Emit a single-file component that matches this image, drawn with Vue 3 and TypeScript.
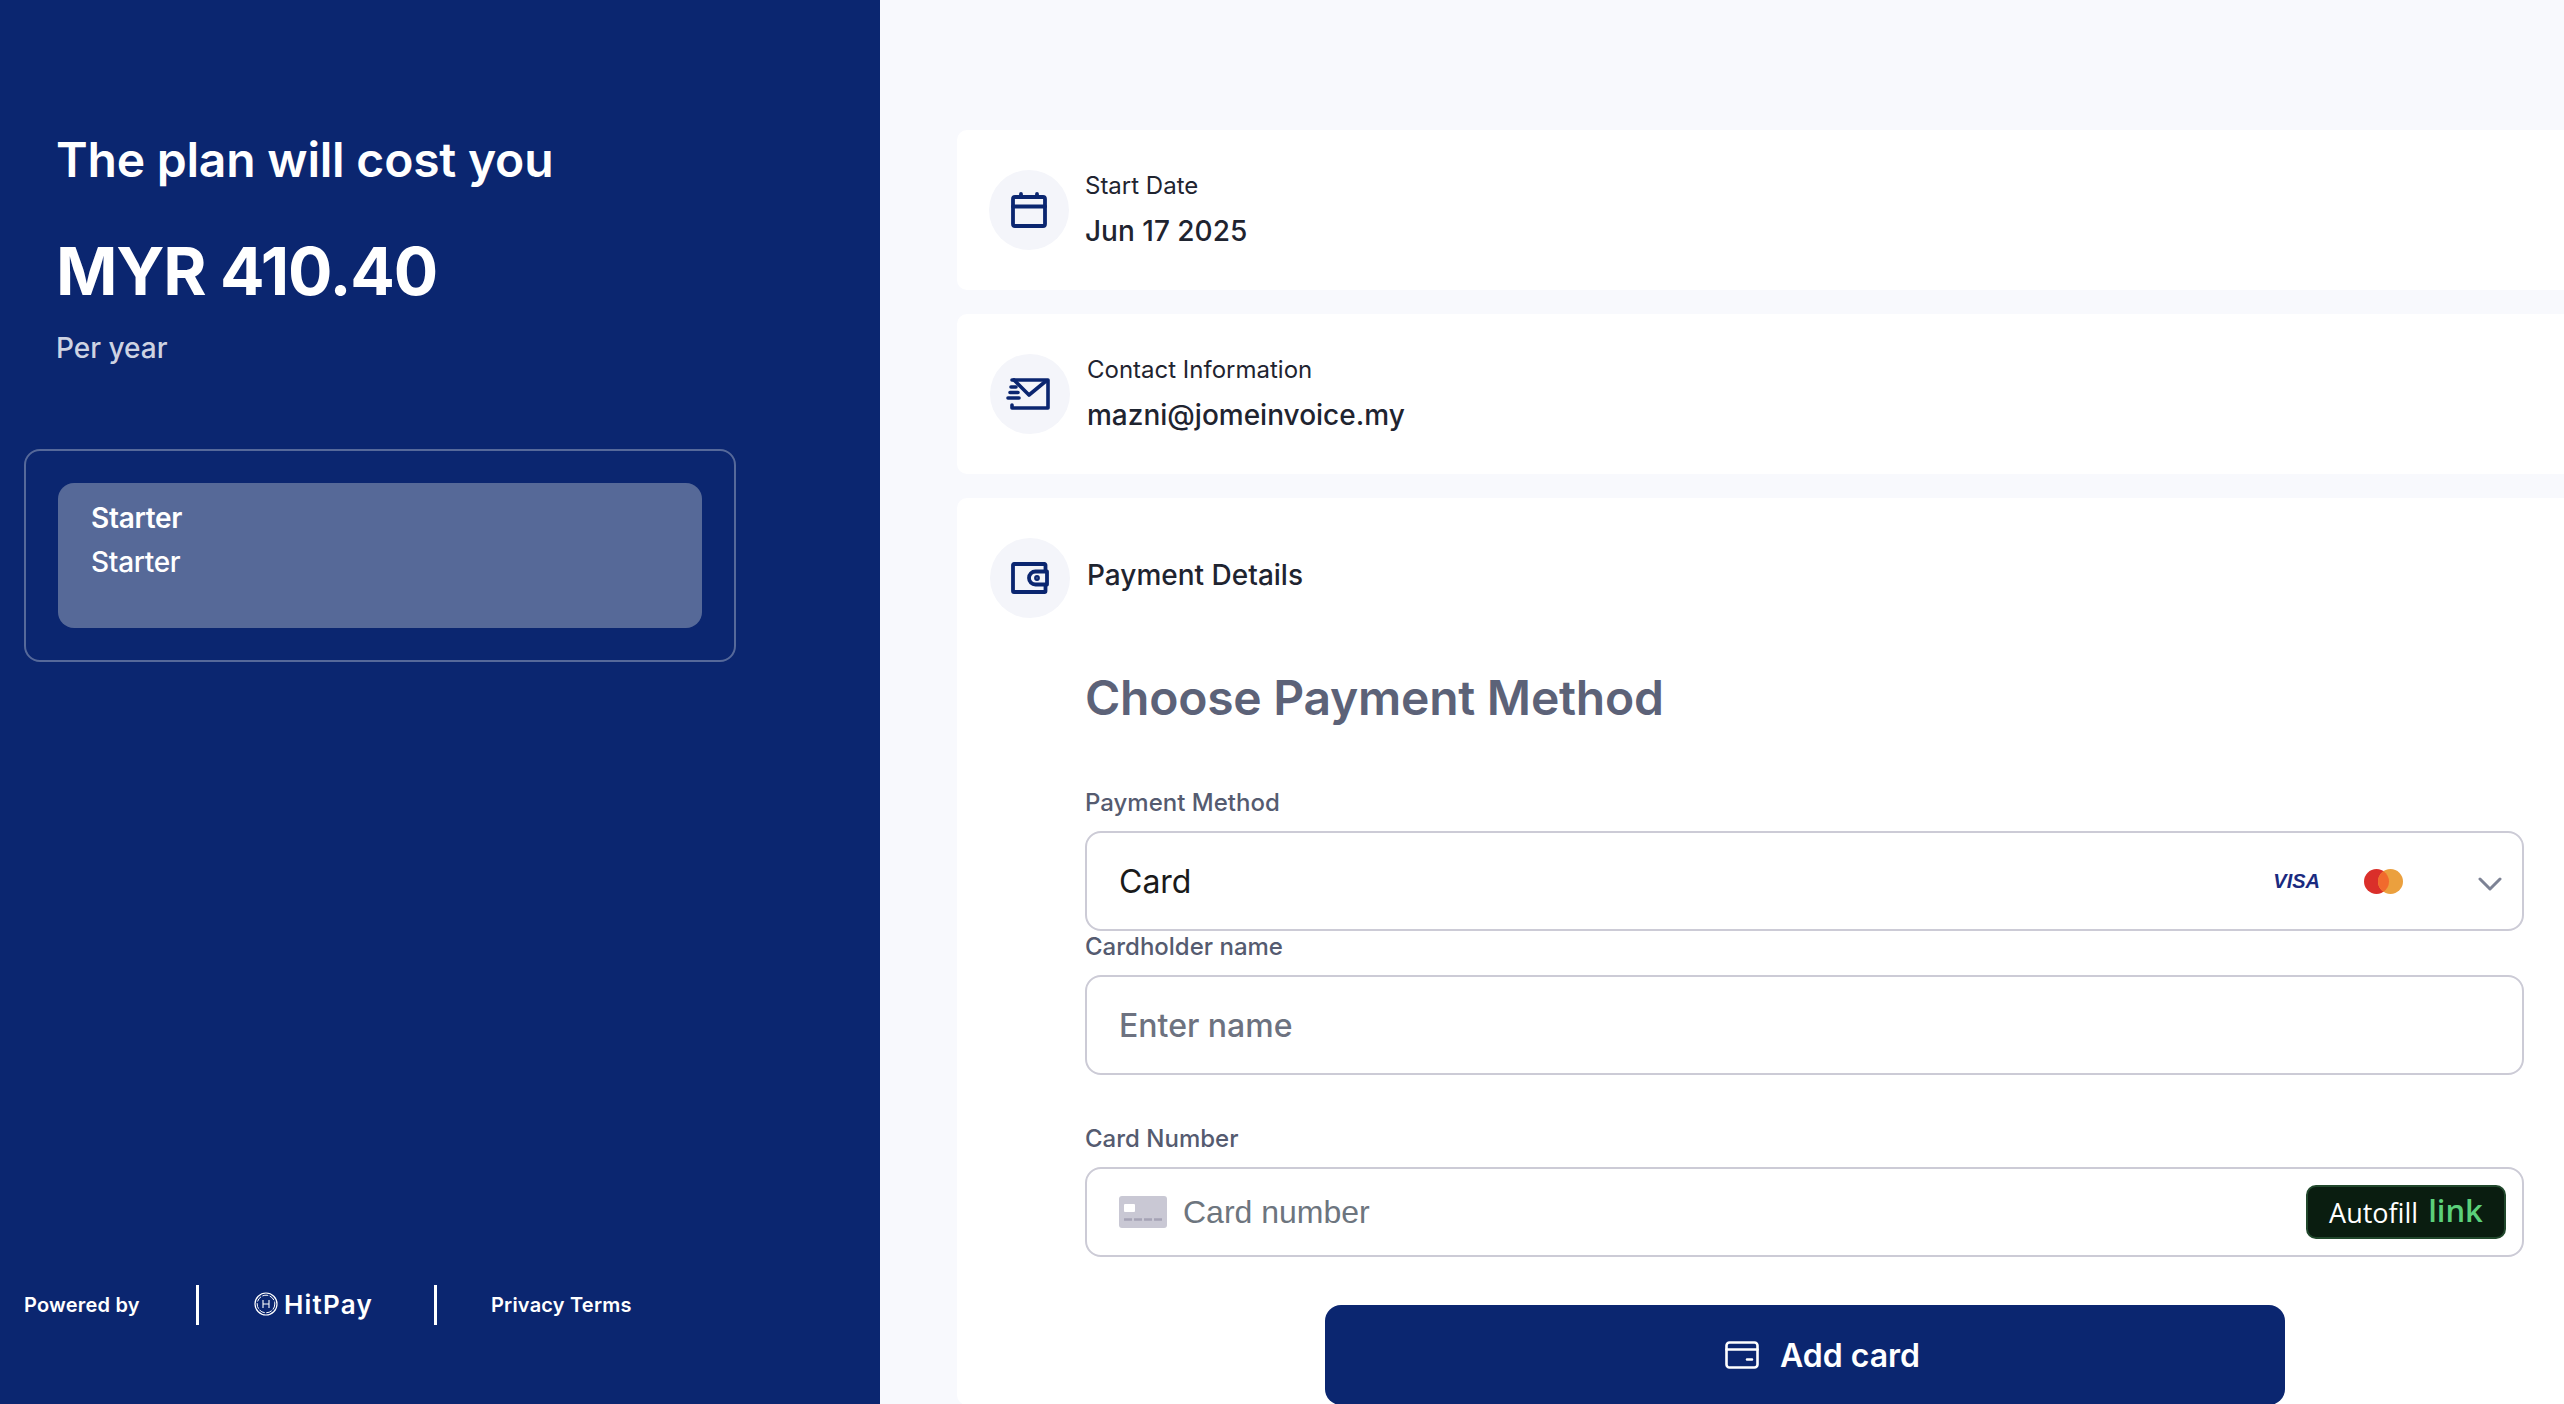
<script setup lang="ts">
const price = 'MYR 410.40'
const planName = 'Starter'
const email = 'mazni@jomeinvoice.my'
</script>

<template>
  <div class="page">
    <aside class="side">
      <div class="summary">
        <h1 class="cost-title">The plan will cost you</h1>
        <div class="cost-price">{{ price }}</div>
        <div class="cost-period">Per year</div>
      </div>
      <div class="plan-box">
        <div class="plan-item">
          <div class="plan-name">{{ planName }}</div>
          <div class="plan-desc">{{ planName }}</div>
        </div>
      </div>
      <footer class="side-foot">
        <span class="powered">Powered by</span>
        <span class="foot-line"></span>
        <span class="hitpay">
          <svg width="24" height="24" viewBox="0 0 24 24" fill="none" stroke="#fff">
            <circle cx="12" cy="12" r="11" stroke-width="1.200" />
            <circle cx="12" cy="12" r="8.800" stroke-width="1" stroke-dasharray="6 1.500" />
            <path d="M9 8v8M15 8v8M9 12h6" stroke-width="1.100" />
          </svg>
          HitPay
        </span>
        <span class="foot-line"></span>
        <span class="legal">Privacy Terms</span>
      </footer>
    </aside>

    <main class="main">
      <section class="card row-card">
        <span class="icon-circle">
          <svg width="36" height="36" viewBox="0 0 36 36" fill="none" stroke="#0b2670" stroke-width="3.800" stroke-linejoin="round" stroke-linecap="round">
            <rect x="2" y="5" width="32" height="29" rx="2" />
            <path d="M2 14.500h32M10 2v3M26 2v3" />
          </svg>
        </span>
        <div class="row-text">
          <div class="row-label">Start Date</div>
          <div class="row-value">Jun 17 2025</div>
        </div>
      </section>

      <section class="card row-card shifted">
        <span class="icon-circle">
          <svg width="48" height="32" viewBox="0 0 48 32" fill="none" stroke="#0b2670" stroke-width="3.600" stroke-linejoin="round" stroke-linecap="round">
            <path d="M6 2h36v28H6v-3" />
            <path d="M8 2l15 15L40 3" />
            <path d="M5 9h5M2 20h11M4 14.500h8" />
          </svg>
        </span>
        <div class="row-text">
          <div class="row-label">Contact Information</div>
          <div class="row-value">{{ email }}</div>
        </div>
      </section>

      <section class="card pay-card">
        <div class="pay-head">
          <span class="icon-circle">
            <svg width="38" height="32" viewBox="0 0 38 32" fill="none" stroke="#0b2670" stroke-width="3.800" stroke-linejoin="round" stroke-linecap="round">
              <path d="M34.500 9V3a1 1 0 0 0-1-1H3a1 1 0 0 0-1 1v26a1 1 0 0 0 1 1h30.500a1 1 0 0 0 1-1v-6" />
              <path d="M36 9.500H24.500a6.500 6.500 0 0 0 0 13H36z" />
              <circle cx="26" cy="16" r="1" fill="#0b2670" />
            </svg>
          </span>
          <span class="pay-title">Payment Details</span>
        </div>

        <div class="pay-form">
          <h2 class="form-title">Choose Payment Method</h2>

          <label class="field-label method-label">Payment Method</label>
          <div class="field method-field">
            <span class="method-value">Card</span>
            <span class="visa">VISA</span>
            <svg class="mc" width="39" height="25" viewBox="0 0 39 25">
              <circle cx="12.500" cy="12.500" r="12.500" fill="#da2f2a" />
              <circle cx="26.500" cy="12.500" r="12.500" fill="#eba03e" />
              <path d="M19.500 2.140A12.500 12.500 0 0 1 19.500 22.860A12.500 12.500 0 0 1 19.500 2.140z" fill="#f16a2d" />
            </svg>
            <svg class="chevron" width="24" height="14" viewBox="0 0 24 14" fill="none" stroke="#7d8395" stroke-width="3" stroke-linecap="round" stroke-linejoin="round">
              <path d="M2 2l10 10L22 2" />
            </svg>
          </div>

          <label class="field-label name-label">Cardholder name</label>
          <div class="field name-field">Enter name</div>

          <label class="field-label number-label">Card Number</label>
          <div class="field number-field">
            <svg width="48" height="32" viewBox="0 0 48 32">
              <rect width="48" height="32" rx="3" fill="#c9c8d4" />
              <rect x="5" y="8" width="11" height="8" rx="1" fill="#fff" />
              <path d="M5 23.500h8M15 23.500h8M25 23.500h8M35 23.500h8" stroke="#a5a3b5" stroke-width="2.500" />
            </svg>
            <span class="number-text">Card number</span>
            <span class="autofill">Autofill <b>link</b></span>
          </div>

          <button class="add-btn" type="button">
            <svg width="34" height="28" viewBox="0 0 34 28" fill="none" stroke="#fff" stroke-width="2.600" stroke-linejoin="round" stroke-linecap="round">
              <rect x="1.500" y="1.500" width="31" height="25" rx="3" />
              <path d="M1.500 8.500h31M22 18.500h5" />
            </svg>
            Add card
          </button>
        </div>
      </section>
    </main>
  </div>
</template>

<style>
html,
body {
  margin: 0;
  background: #f8f9fd;
}
</style>

<style scoped>
.page {
  display: grid;
  grid-template-columns: 880px 1fr;
  height: 1404px;
  overflow: hidden;
  font-family: Inter, "Liberation Sans", sans-serif;
  background: #f8f9fd;
}

.side {
  display: flex;
  flex-direction: column;
  background: #0b2670;
  color: #fff;
  padding: 0 24px;
}

.summary {
  padding: 130px 0 0 32px;
}

.cost-title {
  margin: 0;
  font-size: 48px;
  line-height: 60px;
  font-weight: 600;
  letter-spacing: -0.2px;
}

.cost-price {
  margin-top: 41px;
  font-size: 66px;
  line-height: 80px;
  font-weight: 700;
  letter-spacing: -1.2px;
}

.cost-period {
  margin-top: 19px;
  font-size: 28px;
  line-height: 36px;
  font-weight: 500;
  color: #ced3e2;
}

.plan-box {
  margin-top: 83px;
  width: 712px;
  height: 213px;
  box-sizing: border-box;
  padding: 32px;
  border: 2px solid #56699a;
  border-radius: 16px;
}

.plan-item {
  height: 100%;
  box-sizing: border-box;
  padding: 13px 33px;
  background: #566998;
  border-radius: 16px;
  font-size: 28px;
  line-height: 44px;
  font-weight: 500;
  letter-spacing: -0.3px;
}

.plan-name {
  font-weight: 600;
}

.side-foot {
  margin-top: auto;
  margin-bottom: 80px;
  display: flex;
  align-items: center;
  height: 40px;
  font-size: 20px;
  font-weight: 600;
  letter-spacing: 0.2px;
}

.powered {
  width: 172px;
}

.foot-line {
  width: 3px;
  height: 40px;
  background: #fff;
}

.hitpay {
  display: flex;
  align-items: center;
  gap: 6px;
  margin-left: 55px;
  width: 180px;
  font-size: 26px;
  letter-spacing: 1.2px;
  margin-top: -2px;
}

.legal {
  margin-left: 54px;
}

.main {
  min-width: 0;
  padding: 130px 0 0 77px;
  display: flex;
  flex-direction: column;
  gap: 24px;
}

.card {
  background: #fff;
  border-radius: 10px 0 0 10px;
}

.row-card {
  height: 160px;
  flex: none;
  box-sizing: border-box;
  padding: 0 32px;
  display: flex;
  align-items: center;
  gap: 16px;
}

.shifted {
  padding-left: 33px;
  gap: 17px;
}

.icon-circle {
  flex: none;
  width: 80px;
  height: 80px;
  border-radius: 50%;
  background: #f4f5fa;
  display: flex;
  align-items: center;
  justify-content: center;
}

.row-text {
  display: flex;
  flex-direction: column;
  gap: 11px;
  padding-bottom: 1px;
  color: #1f2430;
}

.row-label {
  font-size: 24px;
  line-height: 32px;
}

.row-value {
  font-size: 28px;
  line-height: 36px;
  font-weight: 500;
}

.pay-card {
  flex: 1;
  padding: 40px 40px 0 33px;
}

.pay-head {
  display: flex;
  align-items: center;
  gap: 17px;
}

.pay-title {
  margin-top: -7px;
  font-size: 28px;
  font-weight: 500;
  color: #1f2430;
}

.pay-form {
  margin-left: 95px;
  display: flex;
  flex-direction: column;
}

.form-title {
  margin: 48px 0 0;
  font-size: 48px;
  line-height: 64px;
  font-weight: 600;
  letter-spacing: -0.25px;
  color: #5c6278;
}

.field-label {
  font-size: 24px;
  line-height: 32px;
  font-weight: 500;
  color: #555b70;
}

.method-label {
  margin-top: 57px;
}

.name-label {
  margin-top: 0;
}

.number-label {
  margin-top: 48px;
}

.field {
  display: flex;
  align-items: center;
  box-sizing: border-box;
  margin-top: 0;
  padding: 0 32px;
  background: #fff;
  border: 2px solid #cccbd6;
  border-radius: 16px;
}

.method-field {
  height: 100px;
  margin-top: 12px;
  font-size: 32px;
  color: #1a1a1a;
}

.method-value {
  flex: 1;
}

.visa {
  font-family: "Liberation Sans", sans-serif;
  font-size: 20px;
  font-weight: 700;
  font-style: italic;
  color: #1a2a80;
}

.mc {
  margin-left: 44px;
}

.chevron {
  margin-left: 75px;
  margin-right: -12px;
  margin-top: 6px;
}

.name-field {
  height: 100px;
  margin-top: 12px;
  font-size: 32px;
  font-weight: 500;
  color: #6d7280;
}

.number-field {
  height: 90px;
  margin-top: 12px;
  padding-right: 16px;
}

.number-text {
  flex: 1;
  margin-left: 16px;
  font-family: "Liberation Sans", sans-serif;
  font-size: 32px;
  color: #6d757e;
}

.autofill {
  display: flex;
  align-items: center;
  gap: 10px;
  box-sizing: border-box;
  width: 200px;
  height: 54px;
  justify-content: center;
  background: #0a1d10;
  border: 2px solid #21482c;
  border-radius: 10px;
  color: #fff;
  font-family: "Open Sans", sans-serif;
  font-size: 27px;
}

.autofill b {
  color: #5bd07a;
  font-weight: 600;
  font-size: 31px;
  margin-top: -4px;
}

.add-btn {
  align-self: center;
  margin-top: 48px;
  width: 960px;
  height: 100px;
  border: 0;
  border-radius: 16px;
  padding: 0 0 0 36px;
  background: #0b2670;
  color: #fff;
  font-family: Inter, sans-serif;
  font-size: 32px;
  font-weight: 600;
  display: flex;
  align-items: center;
  justify-content: center;
  gap: 21px;
}
</style>
